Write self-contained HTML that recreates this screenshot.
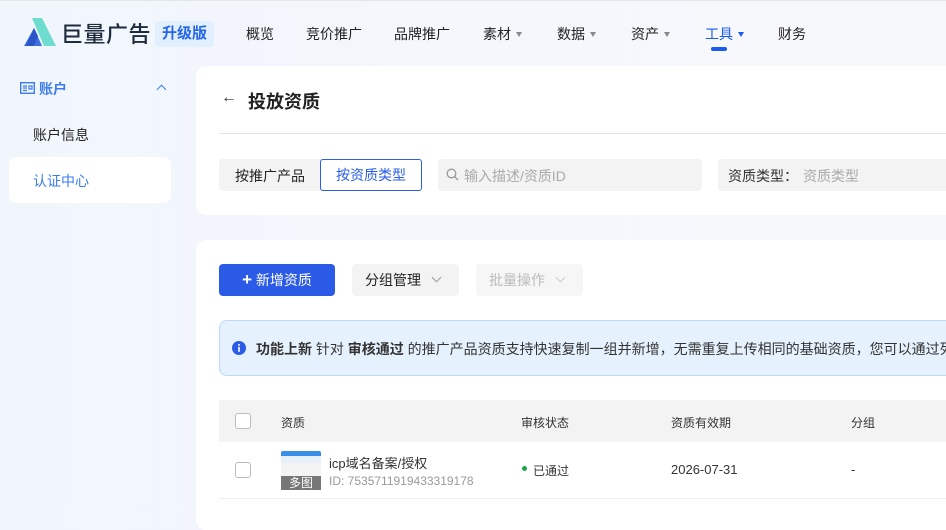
<!DOCTYPE html>
<html><head><meta charset="utf-8"><style>
*{margin:0;padding:0;box-sizing:border-box}
body{width:946px;height:507px;overflow:hidden;background:linear-gradient(90deg,#f1f6fd,#f7f8fb);font-family:"Liberation Sans","Noto Sans CJK SC",sans-serif;position:relative;color:#222}
.a{position:absolute;white-space:nowrap}
.nav{font-size:14px;color:#222;top:24px}
.tri{display:inline-block;width:0;height:0;border-left:3.5px solid transparent;border-right:3.5px solid transparent;border-top:5px solid #888;margin-left:5px;vertical-align:2px}
.card{position:absolute;background:#fff;border-radius:10px}
.btn{position:absolute;height:32px;border-radius:4px;font-size:14px;line-height:32px}
.chev{display:inline-block;width:7px;height:7px;border-right:1.3px solid #999;border-bottom:1.3px solid #999;transform:rotate(45deg);vertical-align:4px;margin-left:12px}
.cb{position:absolute;width:16px;height:16px;border:1px solid #bbb;border-radius:3px;background:#fff}
</style></head><body>
<div class="a" style="top:0;left:0;width:946px;height:1px;background:#e6e6e6"></div>
<svg class="a" style="left:22px;top:18px" width="34" height="30" viewBox="0 0 34 30"><polygon points="12,10 20,28 2,28" fill="#3a6fe0"/><polygon points="10,0 20,0 34,28 22,28" fill="#6fdcd0"/><polygon points="12,10 16,18 12,28 4,28" fill="#2c55c8"/></svg>
<div class="a" style="left:61px;top:17px;font-size:22px;font-weight:500;color:#1e2b3c;letter-spacing:0.5px">巨量广告</div>
<div class="a" style="left:155px;top:21px;width:59px;height:26px;background:#e2efff;border-radius:4px;color:#2466e8;font-size:15px;font-weight:bold;text-align:center;line-height:26px">升级版</div>
<div class="a nav" style="left:246px">概览</div>
<div class="a nav" style="left:306px">竞价推广</div>
<div class="a nav" style="left:394px">品牌推广</div>
<div class="a nav" style="left:483px">素材<span class="tri"></span></div>
<div class="a nav" style="left:557px">数据<span class="tri"></span></div>
<div class="a nav" style="left:631px">资产<span class="tri"></span></div>
<div class="a nav" style="left:705px;color:#1a5bf0">工具<span class="tri" style="border-top-color:#1a5bf0"></span></div>
<div class="a" style="left:711px;top:47px;width:16px;height:4px;border-radius:2px;background:#1a5bf0"></div>
<div class="a nav" style="left:778px">财务</div>

<svg class="a" style="left:20px;top:82px" width="15" height="12" viewBox="0 0 15 12"><rect x="0.7" y="0.7" width="13.6" height="10.6" fill="none" stroke="#3b7cf0" stroke-width="1.4"/><path d="M3 4h4M3 6h4M3 8.5h4M9 4h3v3H9z" stroke="#3b7cf0" stroke-width="1.2" fill="none"/></svg>
<div class="a" style="left:39px;top:79px;font-size:14px;color:#3b7cf0;font-weight:bold">账户</div>
<div class="a" style="left:158px;top:86px;width:7px;height:7px;border-left:1.5px solid #3b7cf0;border-top:1.5px solid #3b7cf0;transform:rotate(45deg)"></div>
<div class="a" style="left:33px;top:125px;font-size:14px;color:#222">账户信息</div>
<div class="a" style="left:9px;top:157px;width:162px;height:46px;background:#fff;border-radius:8px"></div>
<div class="a" style="left:33px;top:171px;font-size:14px;color:#3b7cf0">认证中心</div>

<div class="card" style="left:196px;top:66px;width:770px;height:149px"></div>
<div class="a" style="left:221px;top:89px;font-size:16px;color:#333">←</div>
<div class="a" style="left:248px;top:88px;font-size:18px;font-weight:bold;color:#222">投放资质</div>
<div class="a" style="left:219px;top:133px;width:727px;height:1px;background:#e3e3e3"></div>
<div class="a" style="left:219px;top:159px;width:202px;height:32px;background:#f3f3f3;border-radius:4px"></div>
<div class="a" style="left:235px;top:166px;font-size:14px">按推广产品</div>
<div class="a" style="left:320px;top:159px;width:102px;height:32px;border:1px solid #2a5ee8;border-radius:3px;background:#fff;color:#2a5ee8;font-size:14px;text-align:center;line-height:30px">按资质类型</div>
<div class="a" style="left:438px;top:159px;width:264px;height:32px;background:#f3f3f3;border-radius:4px"></div>
<svg class="a" style="left:446px;top:168px" width="13" height="13" viewBox="0 0 13 13"><circle cx="5.5" cy="5.5" r="4.3" fill="none" stroke="#999" stroke-width="1.3"/><path d="M8.7 8.7L12 12" stroke="#999" stroke-width="1.3"/></svg>
<div class="a" style="left:464px;top:166px;font-size:14px;color:#aaa">输入描述/资质ID</div>
<div class="a" style="left:718px;top:159px;width:240px;height:32px;background:#f3f3f3;border-radius:4px"></div>
<div class="a" style="left:728px;top:166px;font-size:14px;color:#333">资质类型：</div>
<div class="a" style="left:803px;top:166px;font-size:14px;color:#aaa">资质类型</div>

<div class="card" style="left:196px;top:240px;width:770px;height:290px"></div>
<div class="btn" style="left:219px;top:264px;width:116px;background:#2b5be6;color:#fff;text-align:center"><b style="font-size:17px">+</b> 新增资质</div>
<div class="btn" style="left:352px;top:264px;width:107px;background:#f3f3f3;padding-left:13px">分组管理<span class="chev"></span></div>
<div class="btn" style="left:476px;top:264px;width:107px;background:#f6f6f6;padding-left:13px;color:#bbb">批量操作<span class="chev" style="border-color:#ccc"></span></div>
<div class="a" style="left:219px;top:320px;width:740px;height:56px;background:#e5f2fd;border:1px solid #bcd8f6;border-radius:8px"></div>
<svg class="a" style="left:232px;top:341px" width="14" height="14"><circle cx="7" cy="7" r="7" fill="#2b5be6"/><rect x="6.2" y="5.8" width="1.6" height="5" fill="#fff"/><rect x="6.2" y="3" width="1.6" height="1.7" fill="#fff"/></svg>
<div class="a" style="left:256px;top:339px;font-size:14px;color:#333"><b>功能上新</b> 针对 <b>审核通过</b> 的推广产品资质支持快速复制一组并新增，无需重复上传相同的基础资质，您可以通过列</div>
<div class="a" style="left:219px;top:400px;width:727px;height:42px;background:#f3f3f3"></div>
<div class="cb" style="left:235px;top:413px"></div>
<div class="a" style="left:281px;top:414px;font-size:12px;color:#333">资质</div>
<div class="a" style="left:521px;top:414px;font-size:12px;color:#333">审核状态</div>
<div class="a" style="left:671px;top:414px;font-size:12px;color:#333">资质有效期</div>
<div class="a" style="left:851px;top:414px;font-size:12px;color:#333">分组</div>
<div class="cb" style="left:235px;top:462px"></div>
<div class="a" style="left:281px;top:451px;width:40px;height:39px;background:linear-gradient(#3a8ee8 0 5px,#e8f0fa 5px 12px,#f4f4f4 12px);border-radius:2px"></div>
<div class="a" style="left:281px;top:476px;width:40px;height:14px;background:#777;color:#fff;font-size:12px;line-height:14px;text-align:center">多图</div>
<div class="a" style="left:329px;top:453px;font-size:13px;color:#333">icp域名备案/授权</div>
<div class="a" style="left:329px;top:474px;font-size:12px;color:#999">ID: 7535711919433319178</div>
<div class="a" style="left:522px;top:466px;width:5px;height:5px;border-radius:50%;background:#1aa34a"></div>
<div class="a" style="left:533px;top:462px;font-size:12px;color:#333">已通过</div>
<div class="a" style="left:671px;top:462px;font-size:13px;color:#333">2026-07-31</div>
<div class="a" style="left:851px;top:462px;font-size:13px;color:#333">-</div>
<div class="a" style="left:219px;top:498px;width:727px;height:1px;background:#eee"></div>
</body></html>
